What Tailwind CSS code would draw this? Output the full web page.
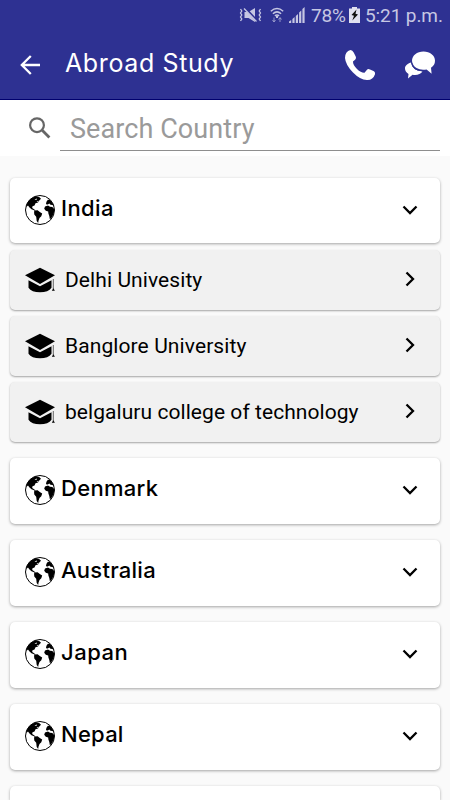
<!DOCTYPE html>
<html lang="en">
<head>
<meta charset="utf-8">
<meta name="viewport" content="width=device-width, initial-scale=1">
<title>Abroad Study</title>
<script src="https://cdn.jsdelivr.net/npm/@tailwindcss/browser@4"></script>
</head>
<body class="w-[450px] h-[800px] overflow-hidden bg-[#fafafa] font-[Roboto,sans-serif] text-black flex flex-col">
<svg class="hidden">
  <symbol id="globe" viewBox="0 0 30 30">
    <circle cx="15" cy="15" r="14.500" fill="#fff" stroke="#000" stroke-width="1"/>
    <path d="M1.500 10C3 5.500 7 2.400 11 1.300L14.500 2.200l1.500 1.600-1.500 1.500-1.500 2.300-2.500.7L9.500 10.500 7.500 11.200 7.200 13 9.500 14.500 10.500 16 9 15.300 6.500 14.300 4.500 12.500 3 10.500 1.300 12Z"/>
    <path d="M9.500 4.500l2.500-1-.6 1.600zM11.500 6.500l2-.8-.2 1.400z" fill="#fff"/>
    <path d="M9.300 15.500L12.600 15.300l2.200 1.600 2.400 1.500-.9 2.900-1.800 1.600-1 2.800-.3 2.200-1.500-2-.5-4.200-1.900-2.200-.2-2z"/>
    <path d="M21 8.500l.6-2 1.300-1.700 1.800 0C27 7 28.500 9 29 11.500l-1.500-1.500-2-.2-1.200-1.200-1.500 1-1.300-.1zM20 11.500l3-1 2 1.200 2.300.2 1.900 2.200c.2 4-1 6.800-3.200 9.300l-1.200.7-.5-3-.9-2.500-.2-2.200-2.400-.6-1.600-2z"/>
  </symbol>
  <symbol id="cap" viewBox="0 0 30 26">
    <path d="M15 .8L30 8.300 15 17 0 8.300Z"/>
    <path d="M3.500 13.200L15 19.300 26.500 13.200v7.500c-2 3-6 4.600-11.500 4.600S5.500 23.700 3.500 20.700Z"/>
    <path d="M28.300 12V22" fill="none" stroke="#666" stroke-width="1"/>
    <path d="M28.300 21.300l1.600 2.500H26.800z"/>
  </symbol>
  <symbol id="down" viewBox="0 0 16 10"><path d="M1.500 1.500L8 8l6.500-6.500" fill="none" stroke="#000" stroke-width="2.300"/></symbol>
  <symbol id="right" viewBox="0 0 10 16"><path d="M1.500 1.500L8 8l-6.500 6.500" fill="none" stroke="#000" stroke-width="2.300"/></symbol>
</svg>

<header class="h-[100px] shrink-0 bg-[#2e3192] border-b border-[#00006e] flex flex-col text-white">
  <div class="h-[30px] flex items-center justify-end pr-[8px] text-[#c6c7e3] text-[19px] leading-none">
    <svg class="w-[23px] h-[16px] mr-[8px]" viewBox="0 0 23 16" fill="none" stroke="currentColor" stroke-width="1.300">
      <path d="M1.500 2l1.300 2-1.300 2 1.300 2-1.300 2 1.300 2-1.300 2M21.500 2l-1.300 2 1.300 2-1.300 2 1.300 2-1.300 2 1.300 2"/>
      <path d="M5.500 5h4l6.500-4v14l-6.500-4h-4z" fill="currentColor" stroke="none"/>
      <path d="M6 1L18 14" stroke="#2e3192" stroke-width="2.500"/><path d="M5 1.500L17.500 14.500"/>
    </svg>
    <svg class="w-[14px] h-[16px] mr-[5px]" viewBox="0 0 14 16" fill="none" stroke="currentColor" stroke-width="1.500">
      <path d="M.8 4.200Q7-1.200 13.200 4.200M2.900 6.700Q7 3 11.100 6.700M4.900 8.900Q7 7.200 9.100 8.900"/>
      <path d="M7 9v2" stroke-width="2"/><path d="M4 10.500v4M2.500 13L4 15l1.500-2M10 15v-4M8.500 12.500L10 10.500l1.500 2" stroke-width="1" opacity=".65"/>
    </svg>
    <svg class="w-[16px] h-[16px] mr-[6px]" viewBox="0 0 16 16" fill="currentColor">
      <path d="M0 14.500L2.200 13V16H0zM3.400 12l2.200-2V16H3.400zM6.800 9L9 7V16H6.800zM10.100 5.500l2.200-2V16h-2.200zM13.400 2L15.600 0V16h-2.200z"/>
    </svg>
    <span class="tracking-[-0.200px] w-[35px] whitespace-nowrap">78%</span>
    <svg class="w-[11px] h-[16px] ml-[3px] mr-[5px]" viewBox="0 0 11 16">
      <path d="M3 0h5v1.500h3V16H0V1.500h3z" fill="#e0e0f0"/><path d="M7.500 2.500L2.500 8l2.500.7L3.300 13.500 9 7.500 6.500 6.700z" fill="#111"/>
    </svg>
    <span class="w-[77px] whitespace-nowrap tracking-[-0.100px]">5:21 p.m.</span>
  </div>
  <div class="h-[69px] flex items-center pl-[20px] pr-[15px]">
    <svg class="w-[20px] h-[20px] shrink-0" viewBox="0 0 20 20" fill="none" stroke="#fff" stroke-width="2.300"><path d="M20 10H2M10.800 1L1.800 10l9 9"/></svg>
    <h1 class="ml-[25px] mb-[4px] font-[Inter,sans-serif] text-[25px] leading-[30px] font-normal whitespace-nowrap tracking-[0.620px]">Abroad Study</h1>
    <svg class="ml-auto w-[30px] h-[30px] shrink-0" viewBox="0 0 30 30" fill="#fff"><path d="M5.500 0Q7.500 0 8.700 2.500l2 4q.8 2-.6 3.200L8 11.500q-.2 3.500 4 7.500t7.500 3.700l2.500-3q1-1.100 3-.3l3.500 1.600q2 1 1.500 3.200-2 5.800-7.500 5.800-7 .2-14.500-7.500T0 8Q0 1.500 5.500 0Z"/></svg>
    <svg class="ml-[30px] w-[30px] h-[28px] shrink-0" viewBox="0 0 30 28" fill="#fff">
      <path d="M6 11.500C1.500 13 0 15 0 17.500q0 3 3.500 5.500L3 27.500l4.500-3.700q7 1 10-3.300Q7 19.500 6 11.500Z"/>
      <path d="M18.500.5C25 .5 30 4.500 30 9.700q0 4.300-4 7l.6 6-5-4.300Q15.500 19.500 11.500 17T7 10C7 4.500 12 .5 18.500.5Z"/>
      <path d="M6.500 11.500Q8 20 17.500 19.700" fill="none" stroke="#2e3192" stroke-width="1"/>
    </svg>
  </div>
</header>

<section class="h-[56px] shrink-0 bg-white flex pl-[28px] pr-[10px]">
  <svg class="w-[24px] h-[24px] mt-[16px] shrink-0" viewBox="0 0 24 24" fill="none" stroke="#666"><circle cx="9" cy="9.200" r="6.900" stroke-width="2.200"/><path d="M14.200 14.200l7.200 7.200" stroke-width="2.800"/></svg>
  <div class="ml-[8px] flex-1 h-[51px] border-b border-[#8e8e8e] pl-[10px] pt-[12px] text-[27px] leading-[34px] text-[#9a9a9a] whitespace-nowrap tracking-[0.080px]">Search Country</div>
</section>

<main class="flex-1 min-h-0 overflow-hidden pt-[22px] px-[10px] flex flex-col *:shrink-0">
  <div class="h-[65px] mb-[7px] rounded-[5px] bg-white shadow-[0_1px_3px_rgba(0,0,0,0.35)] flex items-center pl-[15px] pr-[22px]">
    <svg class="mb-[2px] w-[30px] h-[30px]"><use href="#globe"/></svg><span class="ml-[6px] mb-[6px] font-[Inter,sans-serif] font-medium text-[22px] leading-[30px] tracking-[0.400px]">India</span><svg class="ml-auto mb-[2px] w-[16px] h-[10px]"><use href="#down"/></svg>
  </div>
  <div class="h-[60px] mb-[6px] rounded-[5px] bg-[#f1f1f1] shadow-[0_1px_2px_rgba(0,0,0,0.35)] flex items-center pl-[15px] pr-[25px]">
    <svg class="w-[30px] h-[26px]"><use href="#cap"/></svg><span class="ml-[10px] text-[21px] leading-[28px] tracking-[0.080px]">Delhi Univesity</span><svg class="ml-auto mb-[2px] w-[10px] h-[16px]"><use href="#right"/></svg>
  </div>
  <div class="h-[60px] mb-[6px] rounded-[5px] bg-[#f1f1f1] shadow-[0_1px_2px_rgba(0,0,0,0.35)] flex items-center pl-[15px] pr-[25px]">
    <svg class="w-[30px] h-[26px]"><use href="#cap"/></svg><span class="ml-[10px] text-[21px] leading-[28px] tracking-[0.100px]">Banglore University</span><svg class="ml-auto mb-[2px] w-[10px] h-[16px]"><use href="#right"/></svg>
  </div>
  <div class="h-[60px] mb-[16px] rounded-[5px] bg-[#f1f1f1] shadow-[0_1px_2px_rgba(0,0,0,0.35)] flex items-center pl-[15px] pr-[25px]">
    <svg class="w-[30px] h-[26px]"><use href="#cap"/></svg><span class="ml-[10px] text-[21px] leading-[28px] tracking-[0.060px]">belgaluru college of technology</span><svg class="ml-auto mb-[2px] w-[10px] h-[16px]"><use href="#right"/></svg>
  </div>
  <div class="h-[66px] mb-[16px] rounded-[5px] bg-white shadow-[0_1px_3px_rgba(0,0,0,0.35)] flex items-center pl-[15px] pr-[22px]">
    <svg class="mb-[2px] w-[30px] h-[30px]"><use href="#globe"/></svg><span class="ml-[6px] mb-[6px] font-[Inter,sans-serif] font-medium text-[22px] leading-[30px] tracking-[0.300px]">Denmark</span><svg class="ml-auto mb-[2px] w-[16px] h-[10px]"><use href="#down"/></svg>
  </div>
  <div class="h-[66px] mb-[16px] rounded-[5px] bg-white shadow-[0_1px_3px_rgba(0,0,0,0.35)] flex items-center pl-[15px] pr-[22px]">
    <svg class="mb-[2px] w-[30px] h-[30px]"><use href="#globe"/></svg><span class="ml-[6px] mb-[6px] font-[Inter,sans-serif] font-medium text-[22px] leading-[30px] tracking-[0.250px]">Australia</span><svg class="ml-auto mb-[2px] w-[16px] h-[10px]"><use href="#down"/></svg>
  </div>
  <div class="h-[66px] mb-[16px] rounded-[5px] bg-white shadow-[0_1px_3px_rgba(0,0,0,0.35)] flex items-center pl-[15px] pr-[22px]">
    <svg class="mb-[2px] w-[30px] h-[30px]"><use href="#globe"/></svg><span class="ml-[6px] mb-[6px] font-[Inter,sans-serif] font-medium text-[22px] leading-[30px] tracking-[0.500px]">Japan</span><svg class="ml-auto mb-[2px] w-[16px] h-[10px]"><use href="#down"/></svg>
  </div>
  <div class="h-[66px] mb-[16px] rounded-[5px] bg-white shadow-[0_1px_3px_rgba(0,0,0,0.35)] flex items-center pl-[15px] pr-[22px]">
    <svg class="mb-[2px] w-[30px] h-[30px]"><use href="#globe"/></svg><span class="ml-[6px] mb-[6px] font-[Inter,sans-serif] font-medium text-[22px] leading-[30px] tracking-[0.250px]">Nepal</span><svg class="ml-auto mb-[2px] w-[16px] h-[10px]"><use href="#down"/></svg>
  </div>
  <div class="h-[14px] rounded-t-[5px] bg-white shadow-[0_1px_3px_rgba(0,0,0,0.35)]"></div>
</main>
</body>
</html>
